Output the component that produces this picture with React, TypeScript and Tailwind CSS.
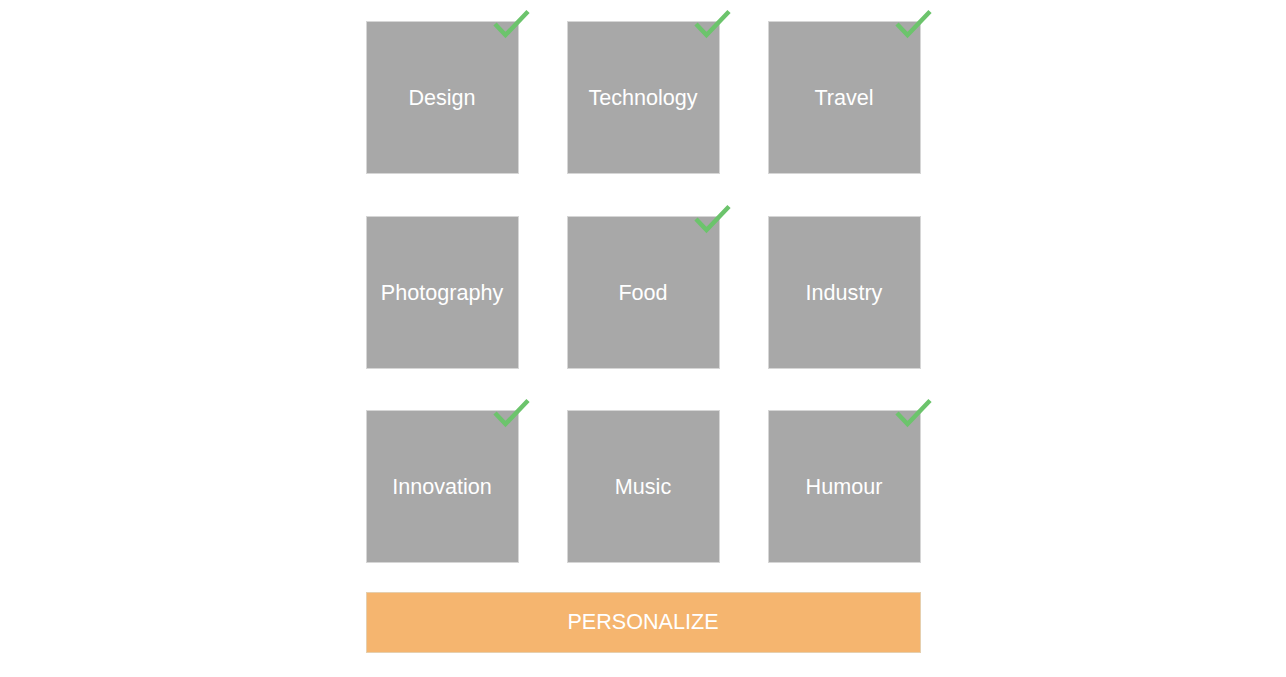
import React from 'react';

const topics = [
  { name: 'Design', checked: true },
  { name: 'Technology', checked: true },
  { name: 'Travel', checked: true },
  { name: 'Photography', checked: false },
  { name: 'Food', checked: true },
  { name: 'Industry', checked: false },
  { name: 'Innovation', checked: true },
  { name: 'Music', checked: false },
  { name: 'Humour', checked: true },
];

const Check = () => (
  <svg className="absolute -right-[14px] -top-[14px]" width="40" height="32" viewBox="0 0 40 32" fill="none">
    <path d="M3 16 L13.5 27 L36 3.5" stroke="#6cc46c" strokeWidth="4.5" strokeLinecap="butt" strokeLinejoin="miter" />
  </svg>
);

const TopicTile: React.FC<{ name: string; checked: boolean }> = ({ name, checked }) => (
  <div className="relative w-[153px] h-[153px] bg-[#a8a8a8] border border-[#d6d6d6] flex items-center justify-center">
    <span className="text-white text-[21.6px] translate-y-[1px]">{name}</span>
    {checked && <Check />}
  </div>
);

export default function App() {
  return (
    <div className="min-h-screen bg-white pt-[21px]" style={{ fontFamily: '"Liberation Sans", Arial, sans-serif' }}>
      <div className="w-[555px] mx-auto">
        <div className="grid grid-cols-[153px_153px_153px] gap-x-[48px] gap-y-[41.5px]">
          {topics.map(t => <TopicTile key={t.name} name={t.name} checked={t.checked} />)}
        </div>
        <button className="mt-[29px] w-full h-[61px] bg-[#f5b56f] border border-[#e6cfae] text-white text-[21.6px] flex items-center justify-center">
          PERSONALIZE
        </button>
      </div>
    </div>
  );
}
